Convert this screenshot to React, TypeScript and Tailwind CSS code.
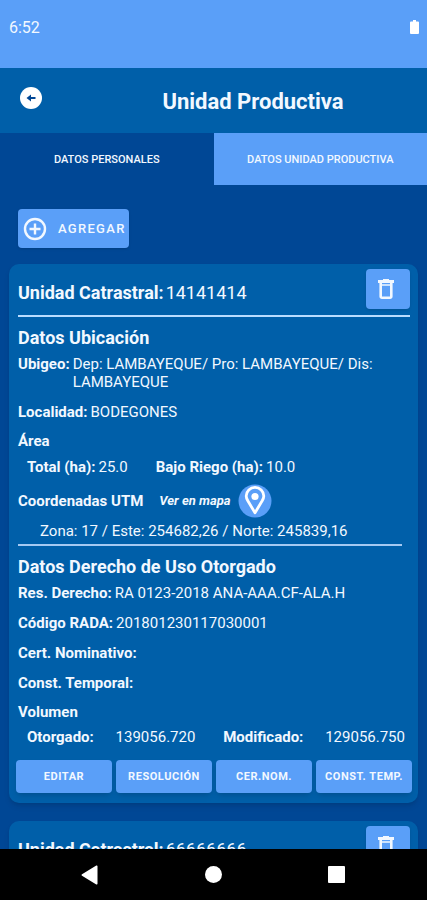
import type { ReactNode } from 'react';

type Parcela = {
  unidad: string;
  ubigeo: string;
  localidad: string;
  total: string;
  riego: string;
  coordenadas: string;
  resolucion: string;
  rada: string;
  otorgado: string;
  modificado: string;
};

const parcelas: Parcela[] = [
  {
    unidad: '14141414',
    ubigeo: 'Dep: LAMBAYEQUE/ Pro: LAMBAYEQUE/ Dis: LAMBAYEQUE',
    localidad: 'BODEGONES',
    total: '25.0',
    riego: '10.0',
    coordenadas: 'Zona: 17 / Este: 254682,26 / Norte: 245839,16',
    resolucion: 'RA 0123-2018 ANA-AAA.CF-ALA.H',
    rada: '201801230117030001',
    otorgado: '139056.720',
    modificado: '129056.750',
  },
  {
    unidad: '66666666',
    ubigeo: '',
    localidad: '',
    total: '',
    riego: '',
    coordenadas: '',
    resolucion: '',
    rada: '',
    otorgado: '',
    modificado: '',
  },
];

const acciones = ['EDITAR', 'RESOLUCIÓN', 'CER.NOM.', 'CONST. TEMP.'];

function TrashIcon() {
  return (
    <svg viewBox="0 0 16 20" className="w-4 h-5" fill="none" stroke="currentColor" aria-hidden="true">
      <path d="M0 2.5h16" strokeWidth="3" />
      <path d="M5 .8h6" strokeWidth="1.6" />
      <path d="M2.700 4v13.500a1.200 1.200 0 0 0 1.200 1.200h8.200a1.200 1.200 0 0 0 1.200-1.200V4" strokeWidth="2.6" />
      <path d="M4 6h8" strokeWidth="1.5" />
    </svg>
  );
}

function PinIcon() {
  return (
    <svg viewBox="0 0 34 34" className="w-[34px] h-[34px]" aria-hidden="true">
      <circle cx="17" cy="17" r="16.5" fill="#5a9ff8" />
      <path
        d="M17 28.800L9.800 16.800C8.800 15 8.200 13.500 8.200 12a8.800 8.600 0 0 1 17.600 0c0 1.500-.6 3-1.600 4.800z"
        fill="none"
        stroke="white"
        strokeWidth="2.8"
        strokeLinejoin="round"
      />
      <circle cx="17" cy="12.5" r="3.6" fill="white" />
    </svg>
  );
}

function Field({ label, children }: { label: string; children?: ReactNode }) {
  return (
    <div className="flex gap-[3px]">
      <dt className="font-bold whitespace-nowrap">{label}</dt>
      <dd>{children}</dd>
    </div>
  );
}

function ParcelaCard({ data }: { data: Parcela }) {
  return (
    <article className="rounded-[10px] bg-[#005fa9] pt-[5px] pb-[10px] shadow-md text-[15px] leading-[18px]">
      <div className="pl-[9px] pr-2">
        <div className="flex items-center justify-between border-b-2 border-[#b9dcff] pb-[6px]">
          <h2 className="flex gap-[2px] pt-2 text-lg leading-6">
            <span className="font-bold">Unidad Catrastral:</span>
            <span>{data.unidad}</span>
          </h2>
          <button
            aria-label="Eliminar"
            className="w-11 h-10 rounded bg-[#5a9ff8] flex items-center justify-center pr-1 shadow-sm"
          >
            <TrashIcon />
          </button>
        </div>

        <h3 className="mt-[9px] text-lg leading-6 font-bold">Datos Ubicación</h3>
        <dl className="mt-[5px] flex flex-col gap-3">
          <Field label="Ubigeo:">{data.ubigeo}</Field>
          <Field label="Localidad:">{data.localidad}</Field>
        </dl>
        <h4 className="mt-[11px] font-bold">Área</h4>
        <dl className="mt-2 pl-[9px] flex gap-7">
          <Field label="Total (ha):">{data.total}</Field>
          <Field label="Bajo Riego (ha):">{data.riego}</Field>
        </dl>
        <div className="mt-2 flex items-center">
          <h4 className="font-bold">Coordenadas UTM</h4>
          <a href="#mapa" className="ml-4 flex items-center gap-2 text-[13px] font-bold italic">
            Ver en mapa
            <PinIcon />
          </a>
        </div>
        <p className="mt-1 pl-[22px]">{data.coordenadas}</p>
        <hr className="mt-1 mr-2 border-0 h-[2px] bg-[#a5c9f2]" />

        <h3 className="mt-[9px] text-lg leading-6 font-bold">Datos Derecho de Uso Otorgado</h3>
        <dl className="mt-[5px] flex flex-col gap-3">
          <Field label="Res. Derecho:">{data.resolucion}</Field>
          <Field label="Código RADA:">{data.rada}</Field>
          <Field label="Cert. Nominativo:" />
          <Field label="Const. Temporal:" />
        </dl>
        <h4 className="mt-[11px] font-bold">Volumen</h4>
        <dl className="mt-[7px] pl-[9px] pr-[5px] flex justify-between">
          <dt className="font-bold">Otorgado:</dt>
          <dd>{data.otorgado}</dd>
          <dt className="font-bold pl-[6px]">Modificado:</dt>
          <dd>{data.modificado}</dd>
        </dl>
      </div>

      <div className="mt-[14px] pl-[7px] pr-[6px] grid grid-cols-4 gap-1">
        {acciones.map((accion) => (
          <button
            key={accion}
            className="h-[33px] rounded bg-[#5a9ff8] text-[11px] font-bold tracking-wider whitespace-nowrap shadow-md"
          >
            {accion}
          </button>
        ))}
      </div>
    </article>
  );
}

export default function App() {
  return (
    <div className="h-screen flex flex-col bg-[#004795] text-[#f2f8ff] font-[Roboto,sans-serif]">
      <div className="h-[68px] shrink-0 bg-[#5a9ff8] flex items-start justify-between pl-[9px] pr-2 pt-[18px]">
        <span className="text-base leading-5">6:52</span>
        <svg viewBox="0 0 9 14" className="mt-[2px] w-[9px] h-[14px]" fill="white" aria-hidden="true">
          <path d="M3 0h3v1.500h2a1 1 0 0 1 1 1V13a1 1 0 0 1-1 1H1a1 1 0 0 1-1-1V2.500a1 1 0 0 1 1-1h2z" />
        </svg>
      </div>

      <header className="h-[65px] shrink-0 bg-[#005fa9] flex items-start pl-5 pt-[19px]">
        <button aria-label="Volver">
          <svg viewBox="0 0 22 22" className="w-[22px] h-[22px]" aria-hidden="true">
            <circle cx="11" cy="11" r="11" fill="white" />
            <path d="M6.500 11L11 7.500V10h4.500v2H11v2.500z" fill="#004795" />
          </svg>
        </button>
        <h1 className="flex-1 pl-[37px] text-center text-[22px] leading-[30px] font-bold">Unidad Productiva</h1>
      </header>

      <nav className="shrink-0 grid grid-cols-2 h-[52px] text-[11px] font-medium">
        <button className="pt-[2px]">DATOS PERSONALES</button>
        <button className="pt-[2px] bg-[#5a9ff8]">DATOS UNIDAD PRODUCTIVA</button>
      </nav>

      <main className="flex-1 min-h-0 overflow-y-auto [scrollbar-width:none] px-[9px] pt-6">
        <button className="ml-[9px] h-[39px] rounded bg-[#5a9ff8] flex items-center gap-[11px] pl-[5px] pr-[3px] text-[13px] font-medium tracking-widest shadow-sm">
          <svg
            viewBox="0 0 24 24"
            className="w-6 h-6"
            fill="none"
            stroke="currentColor"
            strokeWidth="2.4"
            aria-hidden="true"
          >
            <circle cx="12" cy="12" r="10" />
            <path d="M12 6.500v11M6.500 12h11" />
          </svg>
          AGREGAR
        </button>

        <div className="mt-4 flex flex-col gap-[18px]">
          {parcelas.map((parcela) => (
            <ParcelaCard key={parcela.unidad} data={parcela} />
          ))}
        </div>
      </main>

      <footer className="h-[51px] shrink-0 bg-black flex items-center justify-between pl-[81px] pr-[82px] text-white">
        <button aria-label="Atrás">
          <svg viewBox="0 0 18 20" className="w-[18px] h-5" fill="currentColor" aria-hidden="true">
            <path d="M16.500 1.200v17.600a.8.8 0 0 1-1.200.6L1 10.700a.8.8 0 0 1 0-1.400L15.300.600a.8.8 0 0 1 1.200.6z" />
          </svg>
        </button>
        <button aria-label="Inicio" className="w-[17px] h-[17px] rounded-full bg-white" />
        <button aria-label="Recientes" className="w-[17px] h-[17px] rounded-[1px] bg-white" />
      </footer>
    </div>
  );
}
